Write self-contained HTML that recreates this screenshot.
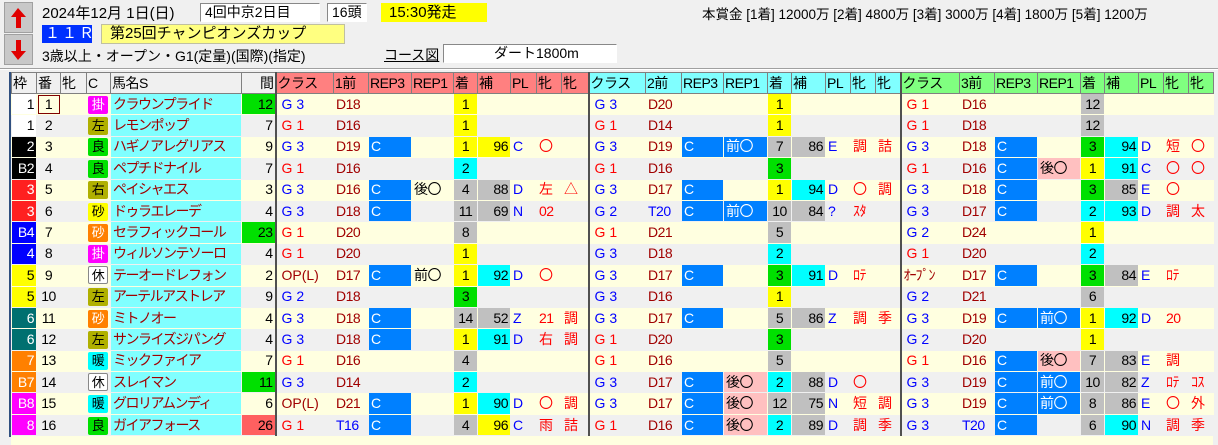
<!DOCTYPE html><html><head><meta charset="utf-8"><style>
*{margin:0;padding:0;box-sizing:border-box}
body{width:1218px;height:445px;background:#f0f0f0;font-family:"Liberation Sans","Noto Sans CJK JP",sans-serif;position:relative;overflow:hidden;font-size:14px;color:#000}
.a{position:absolute;white-space:nowrap}
.btn{position:absolute;left:4px;width:29px;height:31px;background:#c8c8c8;border:1px solid #a0a0a0}
.box{position:absolute;background:#fff;border:1px solid #888;border-right-color:#fff;border-bottom-color:#fff;height:19px;line-height:17px;padding-left:4px}
table{position:absolute;left:11px;top:72px;border-collapse:collapse;table-layout:fixed;width:1202px}
td{height:21.4px;padding:0 2px;border:1px solid transparent;white-space:nowrap;overflow:hidden;font-size:14px;line-height:19px;letter-spacing:-.5px}
tr.h td{height:21px;border:1px solid #808080;background:#f0f0f0;padding:0 1px}
tr.c td{background-clip:padding-box;border-color:#ffffe0}
tr.g td{background-clip:padding-box;border-color:#f0f0f0}
tr.c{background:#ffffe0} tr.g{background:#f0f0f0}
.s1{background:#ff8080!important}.s2{background:#80ffff!important}.s3{background:#80ff80!important}
.dv{border-left:2px solid #505050!important;padding-left:5px!important;letter-spacing:4px}
tr.h .dv{letter-spacing:-.5px;padding-left:1px!important}
.y{background:#ffff00}.cy{background:#00ffff}.gr{background:#c0c0c0}.gn{background:#00e000}.bl{background:#0080ff;color:#fff}.pk{background:#ffc0c0}.rd{background:#ff6060}
.r{color:#f00}.b{color:#0000ff}.dr{color:#a00000}
.ct{text-align:center}.rt{text-align:right}
.nm{background:#80ffff!important;letter-spacing:-1.5px}
.ic{padding:0 1px!important}.ic span{display:inline-block;width:20px;height:18px;line-height:18px;text-align:center;border-radius:2px;font-size:13px}
</style></head><body>
<div class="btn" style="top:2px"><svg width="27" height="29"><path d="M13 5 L6 14 H11 V25 H16 V14 H21 Z" fill="#e00000"/></svg></div>
<div class="btn" style="top:34px"><svg width="27" height="29"><path d="M13 25 L6 16 H11 V5 H16 V16 H21 Z" fill="#e00000"/></svg></div>
<div class="a" style="left:42px;top:2px;font-size:15px">2024年12月 1日(日)</div>
<div class="box" style="left:200px;top:3px;width:120px">4回中京2日目</div>
<div class="box" style="left:327px;top:3px;width:40px">16頭</div>
<div class="a" style="left:381px;top:3px;width:106px;height:19px;background:#ffff00;padding-left:8px;font-size:15px;line-height:19px">15:30発走</div>
<div class="a" style="left:42px;top:25px;width:50px;height:18px;background:#0030ff;color:#fff;font-size:15px;line-height:18px;padding-left:3px;letter-spacing:2px">１１Ｒ</div>
<div class="a" style="left:101px;top:24px;width:244px;height:20px;background:#ffff80;border:1px solid #c0c0a0;font-size:15px;line-height:18px;padding-left:8px">第25回チャンピオンズカップ</div>
<div class="a" style="left:42px;top:46px;font-size:14px">3歳以上・オープン・G1(定量)(国際)(指定)</div>
<div class="a" style="left:384px;top:45px;font-size:14px;text-decoration:underline">コース図</div>
<div class="box" style="left:443px;top:44px;width:174px;padding-left:50px">ダート1800m</div>
<div class="a" style="left:702px;top:3px;font-size:13.5px">本賞金 [1着] 12000万 [2着] 4800万 [3着] 3000万 [4着] 1800万 [5着] 1200万</div>
<div class="a" style="left:0;top:68px;width:1218px;height:2px;border-top:1px solid #a0a0a0;border-bottom:1px solid #fff"></div>
<div class="a" style="left:11px;top:94px;width:1202px;height:351px;background:#ffffe0"></div>
<div class="a" style="left:9px;top:72px;width:2px;height:365px;background:#305080"></div>
<table>
<colgroup><col style="width:25px"><col style="width:24px"><col style="width:26px"><col style="width:24px"><col style="width:131px"><col style="width:34px">
<col style="width:58px"><col style="width:35px"><col style="width:43px"><col style="width:42px"><col style="width:24px"><col style="width:33px"><col style="width:26px"><col style="width:25px"><col style="width:27px">
<col style="width:57px"><col style="width:36px"><col style="width:42px"><col style="width:44px"><col style="width:24px"><col style="width:34px"><col style="width:25px"><col style="width:25px"><col style="width:25px">
<col style="width:59px"><col style="width:35px"><col style="width:43px"><col style="width:43px"><col style="width:24px"><col style="width:34px"><col style="width:25px"><col style="width:25px"><col style="width:25px"></colgroup>
<tr class="h"><td>枠</td><td>番</td><td>牝</td><td>C</td><td>馬名S</td><td class="rt">間</td>
<td class="s1 dv">クラス</td><td class="s1">1前</td><td class="s1">REP3</td><td class="s1">REP1</td><td class="s1">着</td><td class="s1">補</td><td class="s1">PL</td><td class="s1">牝</td><td class="s1">牝</td>
<td class="s2 dv">クラス</td><td class="s2">2前</td><td class="s2">REP3</td><td class="s2">REP1</td><td class="s2">着</td><td class="s2">補</td><td class="s2">PL</td><td class="s2">牝</td><td class="s2">牝</td>
<td class="s3 dv">クラス</td><td class="s3">3前</td><td class="s3">REP3</td><td class="s3">REP1</td><td class="s3">着</td><td class="s3">補</td><td class="s3">PL</td><td class="s3">牝</td><td class="s3">牝</td></tr>

<tr class="c"><td class="rt" style="background:#fff">1</td><td class="ct" style="outline:1px solid #800000;outline-offset:-2px">1</td><td></td><td class="ic"><span style="background:#ff00ff;color:#fff">掛</span></td><td class="nm dr">クラウンプライド</td><td class="rt gn">12</td>
<td class="dv b">G3</td><td class="dr">D18</td><td></td><td></td><td class="ct y">1</td><td></td><td></td><td></td><td></td>
<td class="dv b">G3</td><td class="dr">D20</td><td></td><td></td><td class="ct y">1</td><td></td><td></td><td></td><td></td>
<td class="dv r">G1</td><td class="dr">D16</td><td></td><td></td><td class="ct gr">12</td><td></td><td></td><td></td><td></td></tr>

<tr class="g"><td class="rt" style="background:#fff">1</td><td class="ct">2</td><td></td><td class="ic"><span style="background:#b0b000">左</span></td><td class="nm dr">レモンポップ</td><td class="rt">7</td>
<td class="dv r">G1</td><td class="dr">D16</td><td></td><td></td><td class="ct y">1</td><td></td><td></td><td></td><td></td>
<td class="dv r">G1</td><td class="dr">D14</td><td></td><td></td><td class="ct y">1</td><td></td><td></td><td></td><td></td>
<td class="dv r">G1</td><td class="dr">D18</td><td></td><td></td><td class="ct gr">12</td><td></td><td></td><td></td><td></td></tr>

<tr class="c"><td class="rt" style="background:#000;color:#fff">2</td><td class="ct">3</td><td></td><td class="ic"><span style="background:#00e000">良</span></td><td class="nm dr">ハギノアレグリアス</td><td class="rt">9</td>
<td class="dv b">G3</td><td class="dr">D19</td><td class="bl">C</td><td></td><td class="ct y">1</td><td class="rt y">96</td><td class="b">C</td><td class="r">〇</td><td></td>
<td class="dv b">G3</td><td class="dr">D19</td><td class="bl">C</td><td class="bl">前〇</td><td class="ct gr">7</td><td class="rt gr">86</td><td class="b">E</td><td class="r">調</td><td class="r">詰</td>
<td class="dv b">G3</td><td class="dr">D18</td><td class="bl">C</td><td></td><td class="ct gn">3</td><td class="rt cy">94</td><td class="b">D</td><td class="r">短</td><td class="r">〇</td></tr>

<tr class="g"><td class="rt" style="background:#000;color:#fff">B2</td><td class="ct">4</td><td></td><td class="ic"><span style="background:#00e000">良</span></td><td class="nm dr">ペプチドナイル</td><td class="rt">7</td>
<td class="dv r">G1</td><td class="dr">D16</td><td></td><td></td><td class="ct cy">2</td><td></td><td></td><td></td><td></td>
<td class="dv r">G1</td><td class="dr">D16</td><td></td><td></td><td class="ct gn">3</td><td></td><td></td><td></td><td></td>
<td class="dv r">G1</td><td class="dr">D16</td><td class="bl">C</td><td class="pk">後〇</td><td class="ct y">1</td><td class="rt cy">91</td><td class="b">C</td><td class="r">〇</td><td class="r">〇</td></tr>

<tr class="c"><td class="rt" style="background:#ff2020;color:#fff">3</td><td class="ct">5</td><td></td><td class="ic"><span style="background:#b0b000">右</span></td><td class="nm dr">ペイシャエス</td><td class="rt">3</td>
<td class="dv b">G3</td><td class="dr">D16</td><td class="bl">C</td><td>後〇</td><td class="ct gr">4</td><td class="rt gr">88</td><td class="b">D</td><td class="r">左</td><td class="r">△</td>
<td class="dv b">G3</td><td class="dr">D17</td><td class="bl">C</td><td></td><td class="ct y">1</td><td class="rt cy">94</td><td class="b">D</td><td class="r">〇</td><td class="r">調</td>
<td class="dv b">G3</td><td class="dr">D18</td><td class="bl">C</td><td></td><td class="ct gn">3</td><td class="rt gr">85</td><td class="b">E</td><td class="r">〇</td><td></td></tr>

<tr class="g"><td class="rt" style="background:#ff2020;color:#fff">3</td><td class="ct">6</td><td></td><td class="ic"><span style="background:#ffff00">砂</span></td><td class="nm dr">ドゥラエレーデ</td><td class="rt">4</td>
<td class="dv b">G3</td><td class="dr">D18</td><td class="bl">C</td><td></td><td class="ct gr">11</td><td class="rt gr">69</td><td class="b">N</td><td class="r">02</td><td></td>
<td class="dv b">G2</td><td class="b">T20</td><td class="bl">C</td><td class="bl">前〇</td><td class="ct gr">10</td><td class="rt gr">84</td><td class="b">?</td><td class="r">ｽﾀ</td><td></td>
<td class="dv b">G3</td><td class="dr">D17</td><td class="bl">C</td><td></td><td class="ct cy">2</td><td class="rt cy">93</td><td class="b">D</td><td class="r">調</td><td class="r">太</td></tr>

<tr class="c"><td class="rt" style="background:#0000ff;color:#fff">B4</td><td class="ct">7</td><td></td><td class="ic"><span style="background:#ff8000;color:#fff">砂</span></td><td class="nm dr">セラフィックコール</td><td class="rt gn">23</td>
<td class="dv r">G1</td><td class="dr">D20</td><td></td><td></td><td class="ct gr">8</td><td></td><td></td><td></td><td></td>
<td class="dv r">G1</td><td class="dr">D21</td><td></td><td></td><td class="ct gr">5</td><td></td><td></td><td></td><td></td>
<td class="dv b">G2</td><td class="dr">D24</td><td></td><td></td><td class="ct y">1</td><td></td><td></td><td></td><td></td></tr>

<tr class="g"><td class="rt" style="background:#0000ff;color:#fff">4</td><td class="ct">8</td><td></td><td class="ic"><span style="background:#ff00ff;color:#fff">掛</span></td><td class="nm dr">ウィルソンテソーロ</td><td class="rt">4</td>
<td class="dv r">G1</td><td class="dr">D20</td><td></td><td></td><td class="ct y">1</td><td></td><td></td><td></td><td></td>
<td class="dv b">G3</td><td class="dr">D18</td><td></td><td></td><td class="ct cy">2</td><td></td><td></td><td></td><td></td>
<td class="dv r">G1</td><td class="dr">D20</td><td></td><td></td><td class="ct cy">2</td><td></td><td></td><td></td><td></td></tr>

<tr class="c"><td class="rt" style="background:#ffff00">5</td><td class="ct">9</td><td></td><td class="ic"><span style="background:#fff;border:1px solid #888">休</span></td><td class="nm dr">テーオードレフォン</td><td class="rt">2</td>
<td class="dv dr" style="letter-spacing:0">OP(L)</td><td class="dr">D17</td><td class="bl">C</td><td>前〇</td><td class="ct y">1</td><td class="rt cy">92</td><td class="b">D</td><td class="r">〇</td><td></td>
<td class="dv b">G3</td><td class="dr">D17</td><td class="bl">C</td><td></td><td class="ct gn">3</td><td class="rt cy">91</td><td class="b">D</td><td class="r">ﾛﾃ</td><td></td>
<td class="dv dr" style="letter-spacing:-1px;padding-left:2px!important">ｵｰﾌﾟﾝ</td><td class="dr">D17</td><td class="bl">C</td><td></td><td class="ct gn">3</td><td class="rt gr">84</td><td class="b">E</td><td class="r">ﾛﾃ</td><td></td></tr>

<tr class="g"><td class="rt" style="background:#ffff00">5</td><td class="ct">10</td><td></td><td class="ic"><span style="background:#b0b000">左</span></td><td class="nm dr">アーテルアストレア</td><td class="rt">9</td>
<td class="dv b">G2</td><td class="dr">D18</td><td></td><td></td><td class="ct gn">3</td><td></td><td></td><td></td><td></td>
<td class="dv b">G3</td><td class="dr">D16</td><td></td><td></td><td class="ct y">1</td><td></td><td></td><td></td><td></td>
<td class="dv b">G2</td><td class="dr">D21</td><td></td><td></td><td class="ct gr">6</td><td></td><td></td><td></td><td></td></tr>

<tr class="c"><td class="rt" style="background:#007070;color:#fff">6</td><td class="ct">11</td><td></td><td class="ic"><span style="background:#ff8000;color:#fff">砂</span></td><td class="nm dr">ミトノオー</td><td class="rt">4</td>
<td class="dv b">G3</td><td class="dr">D18</td><td class="bl">C</td><td></td><td class="ct gr">14</td><td class="rt gr">52</td><td class="b">Z</td><td class="r">21</td><td class="r">調</td>
<td class="dv b">G3</td><td class="dr">D17</td><td class="bl">C</td><td></td><td class="ct gr">5</td><td class="rt gr">86</td><td class="b">Z</td><td class="r">調</td><td class="r">季</td>
<td class="dv b">G3</td><td class="dr">D19</td><td class="bl">C</td><td class="bl">前〇</td><td class="ct y">1</td><td class="rt cy">92</td><td class="b">D</td><td class="r">20</td><td></td></tr>

<tr class="g"><td class="rt" style="background:#007070;color:#fff">6</td><td class="ct">12</td><td></td><td class="ic"><span style="background:#b0b000">左</span></td><td class="nm dr">サンライズジパング</td><td class="rt">4</td>
<td class="dv b">G3</td><td class="dr">D18</td><td class="bl">C</td><td></td><td class="ct y">1</td><td class="rt cy">91</td><td class="b">D</td><td class="r">右</td><td class="r">調</td>
<td class="dv r">G1</td><td class="dr">D20</td><td></td><td></td><td class="ct gn">3</td><td></td><td></td><td></td><td></td>
<td class="dv b">G2</td><td class="dr">D20</td><td></td><td></td><td class="ct y">1</td><td></td><td></td><td></td><td></td></tr>

<tr class="c"><td class="rt" style="background:#ff8000;color:#fff">7</td><td class="ct">13</td><td></td><td class="ic"><span style="background:#00ffff">暖</span></td><td class="nm dr">ミックファイア</td><td class="rt">7</td>
<td class="dv r">G1</td><td class="dr">D16</td><td></td><td></td><td class="ct gr">4</td><td></td><td></td><td></td><td></td>
<td class="dv r">G1</td><td class="dr">D16</td><td></td><td></td><td class="ct gr">5</td><td></td><td></td><td></td><td></td>
<td class="dv r">G1</td><td class="dr">D16</td><td class="bl">C</td><td class="pk">後〇</td><td class="ct gr">7</td><td class="rt gr">83</td><td class="b">E</td><td class="r">調</td><td></td></tr>

<tr class="g"><td class="rt" style="background:#ff8000;color:#fff">B7</td><td class="ct">14</td><td></td><td class="ic"><span style="background:#fff;border:1px solid #888">休</span></td><td class="nm dr">スレイマン</td><td class="rt gn">11</td>
<td class="dv b">G3</td><td class="dr">D14</td><td></td><td></td><td class="ct cy">2</td><td></td><td></td><td></td><td></td>
<td class="dv b">G3</td><td class="dr">D17</td><td class="bl">C</td><td class="pk">後〇</td><td class="ct cy">2</td><td class="rt gr">88</td><td class="b">D</td><td class="r">〇</td><td></td>
<td class="dv b">G3</td><td class="dr">D19</td><td class="bl">C</td><td class="bl">前〇</td><td class="ct gr">10</td><td class="rt gr">82</td><td class="b">Z</td><td class="r">ﾛﾃ</td><td class="r">ｺｽ</td></tr>

<tr class="c"><td class="rt" style="background:#ff00ff;color:#fff">B8</td><td class="ct">15</td><td></td><td class="ic"><span style="background:#00ffff">暖</span></td><td class="nm dr">グロリアムンディ</td><td class="rt">6</td>
<td class="dv dr" style="letter-spacing:0">OP(L)</td><td class="dr">D21</td><td class="bl">C</td><td></td><td class="ct y">1</td><td class="rt cy">90</td><td class="b">D</td><td class="r">〇</td><td class="r">調</td>
<td class="dv b">G3</td><td class="dr">D17</td><td class="bl">C</td><td class="pk">後〇</td><td class="ct gr">12</td><td class="rt gr">75</td><td class="b">N</td><td class="r">短</td><td class="r">調</td>
<td class="dv b">G3</td><td class="dr">D19</td><td class="bl">C</td><td class="bl">前〇</td><td class="ct gr">8</td><td class="rt gr">86</td><td class="b">E</td><td class="r">〇</td><td class="r">外</td></tr>

<tr class="g"><td class="rt" style="background:#ff00ff;color:#fff">8</td><td class="ct">16</td><td></td><td class="ic"><span style="background:#00e000">良</span></td><td class="nm dr">ガイアフォース</td><td class="rt rd">26</td>
<td class="dv r">G1</td><td class="b">T16</td><td class="bl">C</td><td></td><td class="ct gr">4</td><td class="rt y">96</td><td class="b">C</td><td class="r">雨</td><td class="r">詰</td>
<td class="dv r">G1</td><td class="dr">D16</td><td class="bl">C</td><td class="pk">後〇</td><td class="ct cy">2</td><td class="rt gr">89</td><td class="b">D</td><td class="r">調</td><td class="r">季</td>
<td class="dv b">G3</td><td class="b">T20</td><td class="bl">C</td><td></td><td class="ct gr">6</td><td class="rt cy">90</td><td class="b">N</td><td class="r">調</td><td class="r">季</td></tr>
</table>
</body></html>
